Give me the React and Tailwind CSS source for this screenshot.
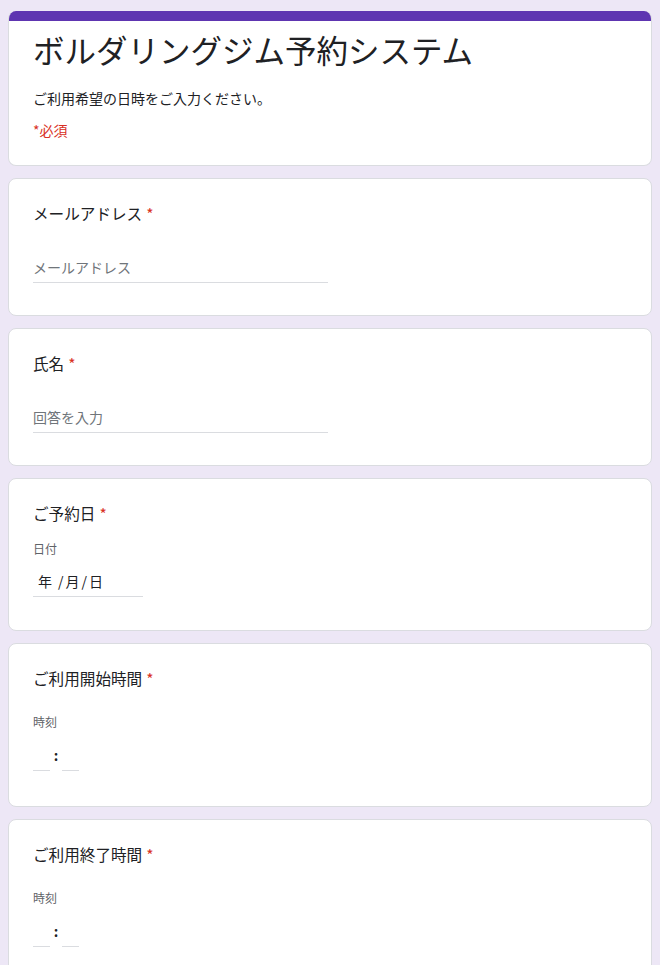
import React from "react";

const font = { fontFamily: '"Noto Sans CJK JP", "Noto Sans", Roboto, sans-serif' };

function Card({ children, className = "" }) {
  return (
    <div className={`bg-white border border-[#dadce0] rounded-[8px] px-6 ${className}`}>{children}</div>
  );
}

function Title({ text }) {
  return (
    <div className="text-[15.6px] leading-[24px] text-[#202124]">
      {text}
      <span className="text-[#d93025] ml-[4px]">*</span>
    </div>
  );
}

function TimeInput() {
  return (
    <div className="flex items-end h-[30px]">
      <div className="w-[17px] border-b border-[#dadce0] h-[26px]" />
      <div className="w-[12px] text-center text-[14px] leading-[20px] text-[#202124] font-bold mb-[6px]">:</div>
      <div className="w-[17px] border-b border-[#dadce0] h-[26px]" />
    </div>
  );
}

export default function App() {
  return (
    <div className="min-h-[965px] bg-[#ede7f6] px-2 pt-[11px] pb-4 flex flex-col gap-3" style={font}>
      <div className="bg-white rounded-[8px] overflow-hidden border-b border-x border-[#dadce0]">
        <div className="h-[10px] bg-[#5e35b1]" />
        <div className="px-6 pt-[8px] pb-[25px]">
          <div className="text-[31.5px] leading-[40px] text-[#202124]">ボルダリングジム予約システム</div>
          <div className="mt-[19px] text-[14px] leading-[20px] text-[#202124]">ご利用希望の日時をご入力ください。</div>
          <div className="mt-[12px] text-[14px] leading-[20px] text-[#d93025]">*必須</div>
        </div>
      </div>

      <Card className="pt-[22px] pb-[32px]">
        <Title text="メールアドレス" />
        <div className="mt-[32px] w-[295px] border-b border-[#dadce0] pb-[5px] text-[14px] leading-[20px] text-[#70757a]">メールアドレス</div>
      </Card>

      <Card className="pt-[22px] pb-[32px]">
        <Title text="氏名" />
        <div className="mt-[32px] w-[295px] border-b border-[#dadce0] pb-[5px] text-[14px] leading-[20px] text-[#70757a]">回答を入力</div>
      </Card>

      <Card className="pt-[22px] pb-[33px]">
        <Title text="ご予約日" />
        <div className="mt-[16px] text-[12px] leading-[16px] text-[#5f6368]">日付</div>
        <div className="mt-[14px] w-[110px] border-b border-[#dadce0] pb-[5px] pl-[5px] text-[14px] leading-[20px] text-[#202124] flex">
          <span>年</span>
          <span className="ml-[6px]">/</span>
          <span className="ml-[2px]">月</span>
          <span className="ml-[2px]">/</span>
          <span className="ml-[2px]">日</span>
        </div>
      </Card>

      <Card className="pt-[22px] pb-[35px]">
        <Title text="ご利用開始時間" />
        <div className="mt-[24px] text-[12px] leading-[16px] text-[#5f6368]">時刻</div>
        <div className="mt-[11px]">
          <TimeInput />
        </div>
      </Card>

      <Card className="pt-[22px] pb-[35px]">
        <Title text="ご利用終了時間" />
        <div className="mt-[24px] text-[12px] leading-[16px] text-[#5f6368]">時刻</div>
        <div className="mt-[11px]">
          <TimeInput />
        </div>
      </Card>
    </div>
  );
}
